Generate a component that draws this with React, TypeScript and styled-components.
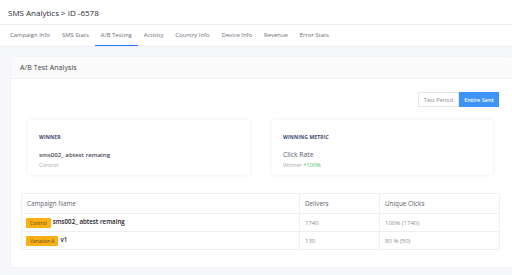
import React from 'react';
import styled, { createGlobalStyle } from 'styled-components';

const GlobalStyle = createGlobalStyle`
  html, body {
    margin: 0;
    padding: 0;
    background: #f6f7fa;
    font-family: 'Open Sans', 'Liberation Sans', sans-serif;
  }
  * { box-sizing: border-box; }
`;

const Page = styled.div`
  width: 512px;
  height: 275px;
  overflow: hidden;
  background: #f6f7fa;
`;

const TopBar = styled.div`
  height: 25px;
  background: #fff;
  border-bottom: 1px solid #ececef;
  display: flex;
  align-items: center;
  padding-left: 8px;
  font-size: 8px;
  color: #2a2a35;
  font-weight: 500;
`;

const Tabs = styled.div`
  height: 22px;
  background: #fff;
  display: flex;
  padding-left: 4px;
  border-bottom: 1px solid #eceef2;
`;

const Tab = styled.div<{ $active?: boolean }>`
  padding: 0 6px;
  display: flex;
  align-items: center;
  font-size: 5.9px;
  color: #6a6d77;
  border-bottom: 1.5px solid ${(p) => (p.$active ? '#2f7cf6' : 'transparent')};
`;

const Card = styled.div`
  margin: 10px 0 0 11px;
  background: #fff;
  box-shadow: 0 0 2px rgba(0, 0, 0, 0.05);
  padding-bottom: 17px;
`;

const CardHeader = styled.div`
  height: 22px;
  background: #fafafa;
  border-bottom: 1px solid #f0f0f2;
  display: flex;
  align-items: center;
  padding-left: 9px;
  font-size: 7px;
  letter-spacing: 0.1px;
  color: #3a3a44;
`;

const CardBody = styled.div`
  padding: 13px 12px 0 10px;
`;

const ButtonRow = styled.div`
  display: flex;
  justify-content: flex-end;
  padding-right: 1px;
`;

const ToggleButton = styled.div<{ $active?: boolean }>`
  height: 15px;
  width: ${(p) => (p.$active ? '40px' : '41px')};
  display: flex;
  align-items: center;
  justify-content: center;
  font-size: 5.6px;
  border: 1px solid ${(p) => (p.$active ? '#3d94f6' : '#e6e8ec')};
  background: ${(p) => (p.$active ? '#3d94f6' : '#fff')};
  color: ${(p) => (p.$active ? '#fff' : '#8a8d96')};
  font-weight: ${(p) => (p.$active ? 600 : 400)};
`;

const SummaryRow = styled.div`
  display: grid;
  grid-template-columns: 222px 221px;
  column-gap: 22px;
  padding: 0 7px;
  margin-top: 13px;
`;

const SummaryBox = styled.div`
  height: 55px;
  background: #fff;
  box-shadow: 0 0 4px rgba(0, 0, 0, 0.07);
  padding: 14px 11px 0;
`;

const SummaryLabel = styled.div`
  font-size: 5px;
  font-weight: 700;
  color: #3b4670;
  letter-spacing: 0.15px;
`;

const SummaryValue = styled.div<{ $strong?: boolean }>`
  margin-top: 10px;
  font-size: ${(p) => (p.$strong ? '6.1px' : '6.8px')};
  font-weight: ${(p) => (p.$strong ? 600 : 400)};
  color: ${(p) => (p.$strong ? '#474a55' : '#5a5d68')};
`;

const SummaryNote = styled.div`
  margin-top: 2px;
  font-size: 5.6px;
  color: #a9acb4;
`;

const Gain = styled.span`
  color: #3fbf6a;
`;

const Table = styled.table`
  width: 479px;
  margin-top: 18px;
  border-collapse: collapse;
  font-size: 6px;
  color: #8a8d96;
`;

const HeadCell = styled.th<{ $w?: number }>`
  height: 20px;
  text-align: left;
  font-weight: 400;
  color: #5e616b;
  font-size: 6.3px;
  padding: 0 5px;
  border: 1px solid #eef0f3;
  width: ${(p) => (p.$w ? `${p.$w}px` : 'auto')};
`;

const Cell = styled.td`
  height: 18px;
  padding: 0 5px;
  border: 1px solid #eef0f3;
`;

const NameCell = styled(Cell)`
  padding-left: 4px;
  color: #1f2028;
  font-weight: 600;
  font-size: 6.2px;
`;

const Badge = styled.span`
  display: inline-block;
  background: #fbb016;
  color: #5a4a20;
  font-size: 4.8px;
  font-weight: 400;
  padding: 2px 4px;
  margin-right: 2px;
  border-radius: 1px;
  vertical-align: middle;
`;

const tabs = ['Campaign Info', 'SMS Stats', 'A/B Testing', 'Activity', 'Country Info', 'Device Info', 'Revenue', 'Error Stats'];

const rows = [
  { badge: 'Control', name: 'sms002_ abtest remaing', delivers: '1740', clicks: '100% (1740)' },
  { badge: 'Variation A', name: 'v1', delivers: '130', clicks: '80 % (50)' },
];

const App: React.FC = () => {
  return (
    <Page>
      <GlobalStyle />
      <TopBar>SMS Analytics &gt; ID -6578</TopBar>
      <Tabs>
        {tabs.map((t) => (
          <Tab key={t} $active={t === 'A/B Testing'}>
            {t}
          </Tab>
        ))}
      </Tabs>
      <Card>
        <CardHeader>A/B Test Analysis</CardHeader>
        <CardBody>
          <ButtonRow>
            <ToggleButton>Test Period</ToggleButton>
            <ToggleButton $active>Entire Sent</ToggleButton>
          </ButtonRow>
          <SummaryRow>
            <SummaryBox>
              <SummaryLabel>WINNER</SummaryLabel>
              <SummaryValue $strong>sms002_ abtest remaing</SummaryValue>
              <SummaryNote>Control</SummaryNote>
            </SummaryBox>
            <SummaryBox>
              <SummaryLabel>WINNING METRIC</SummaryLabel>
              <SummaryValue>Click Rate</SummaryValue>
              <SummaryNote>
                Winner <Gain>+100%</Gain>
              </SummaryNote>
            </SummaryBox>
          </SummaryRow>
          <Table>
            <thead>
              <tr>
                <HeadCell $w={278}>Campaign Name</HeadCell>
                <HeadCell $w={80}>Delivers</HeadCell>
                <HeadCell>Unique Clicks</HeadCell>
              </tr>
            </thead>
            <tbody>
              {rows.map((r) => (
                <tr key={r.name}>
                  <NameCell>
                    <Badge>{r.badge}</Badge>
                    {r.name}
                  </NameCell>
                  <Cell>{r.delivers}</Cell>
                  <Cell>{r.clicks}</Cell>
                </tr>
              ))}
            </tbody>
          </Table>
        </CardBody>
      </Card>
    </Page>
  );
};

export default App;
